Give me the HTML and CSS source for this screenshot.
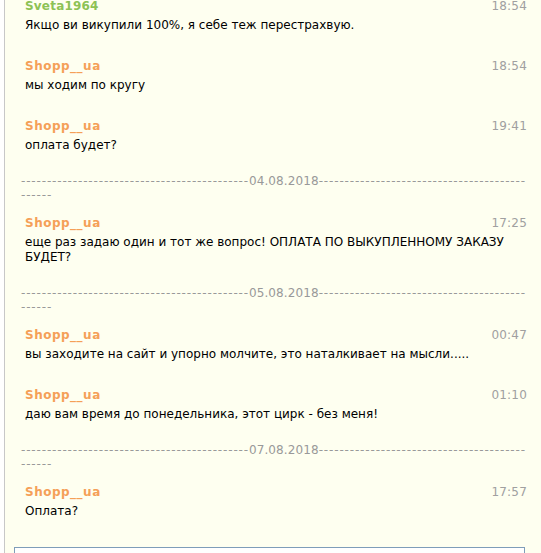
FILE: index.html
```html
<!DOCTYPE html>
<html lang="ru">
<head>
<meta charset="utf-8">
<title>Chat</title>
<link rel="stylesheet" href="styles.css">
</head>
<body>
<div class="chat">
  <div class="list">
    <div class="msg">
      <div class="head"><span class="name green">Sveta1964</span><span class="time">18:54</span></div>
      <div class="text">Якщо ви викупили 100%, я себе теж перестрахвую.</div>
    </div>
    <div class="msg">
      <div class="head"><span class="name">Shopp__ua</span><span class="time">18:54</span></div>
      <div class="text">мы ходим по кругу</div>
    </div>
    <div class="msg">
      <div class="head"><span class="name">Shopp__ua</span><span class="time">19:41</span></div>
      <div class="text">оплата будет?</div>
    </div>
    <div class="sep"><span class="dash">--------------------------------------------</span><span class="date">04.08.2018</span><span class="dash">----------------------------------------</span><br><span class="dash">------</span></div>
    <div class="msg">
      <div class="head"><span class="name">Shopp__ua</span><span class="time">17:25</span></div>
      <div class="text">еще раз задаю один и тот же вопрос! ОПЛАТА ПО ВЫКУПЛЕННОМУ ЗАКАЗУ БУДЕТ?</div>
    </div>
    <div class="sep"><span class="dash">--------------------------------------------</span><span class="date">05.08.2018</span><span class="dash">----------------------------------------</span><br><span class="dash">------</span></div>
    <div class="msg">
      <div class="head"><span class="name">Shopp__ua</span><span class="time">00:47</span></div>
      <div class="text">вы заходите на сайт и упорно молчите, это наталкивает на мысли.....</div>
    </div>
    <div class="msg">
      <div class="head"><span class="name">Shopp__ua</span><span class="time">01:10</span></div>
      <div class="text">даю вам время до понедельника, этот цирк - без меня!</div>
    </div>
    <div class="sep"><span class="dash">--------------------------------------------</span><span class="date">07.08.2018</span><span class="dash">----------------------------------------</span><br><span class="dash">------</span></div>
    <div class="msg">
      <div class="head"><span class="name">Shopp__ua</span><span class="time">17:57</span></div>
      <div class="text">Оплата?</div>
    </div>
  </div>
  <div class="compose"><textarea class="input"></textarea></div>
</div>
</body>
</html>
```
FILE: styles.css
```css
html, body {
  margin: 0;
  padding: 0;
  background: #ffffff;
  height: 100%;
  overflow: hidden;
}
body {
  font-family: "DejaVu Sans", Verdana, sans-serif;
  font-size: 12px;
  color: #000;
}
.chat {
  margin-left: 4px;
  border-left: 1px solid #c8c8c8;
  background: #fefff0;
  height: 100%;
  overflow: hidden;
}
.list {
  margin-top: -6px;
}
.msg {
  padding: 4px 14px 21px 20px;
}
.head {
  display: flex;
  justify-content: space-between;
  line-height: 16px;
  margin-bottom: 4px;
}
.name {
  font-weight: bold;
  color: #f5a058;
  letter-spacing: 0.5px;
}
.name.green {
  color: #8dc255;
  letter-spacing: 0.2px;
}
.time {
  color: #a0a0a0;
  letter-spacing: 0.2px;
}
.text {
  line-height: 15px;
}
.sep {
  padding-left: 16px;
  margin-bottom: 9px;
  line-height: 14px;
  color: #999;
  white-space: nowrap;
}
.dash {
  letter-spacing: 0.85px;
}
.date {
  letter-spacing: 0.1px;
}
.compose {
  padding: 7px 16px 0 9px;
}
.input {
  display: block;
  box-sizing: border-box;
  width: 100%;
  height: 60px;
  margin: 0;
  border: 1px solid #7f9db9;
  background: #fff;
  resize: none;
}
```
